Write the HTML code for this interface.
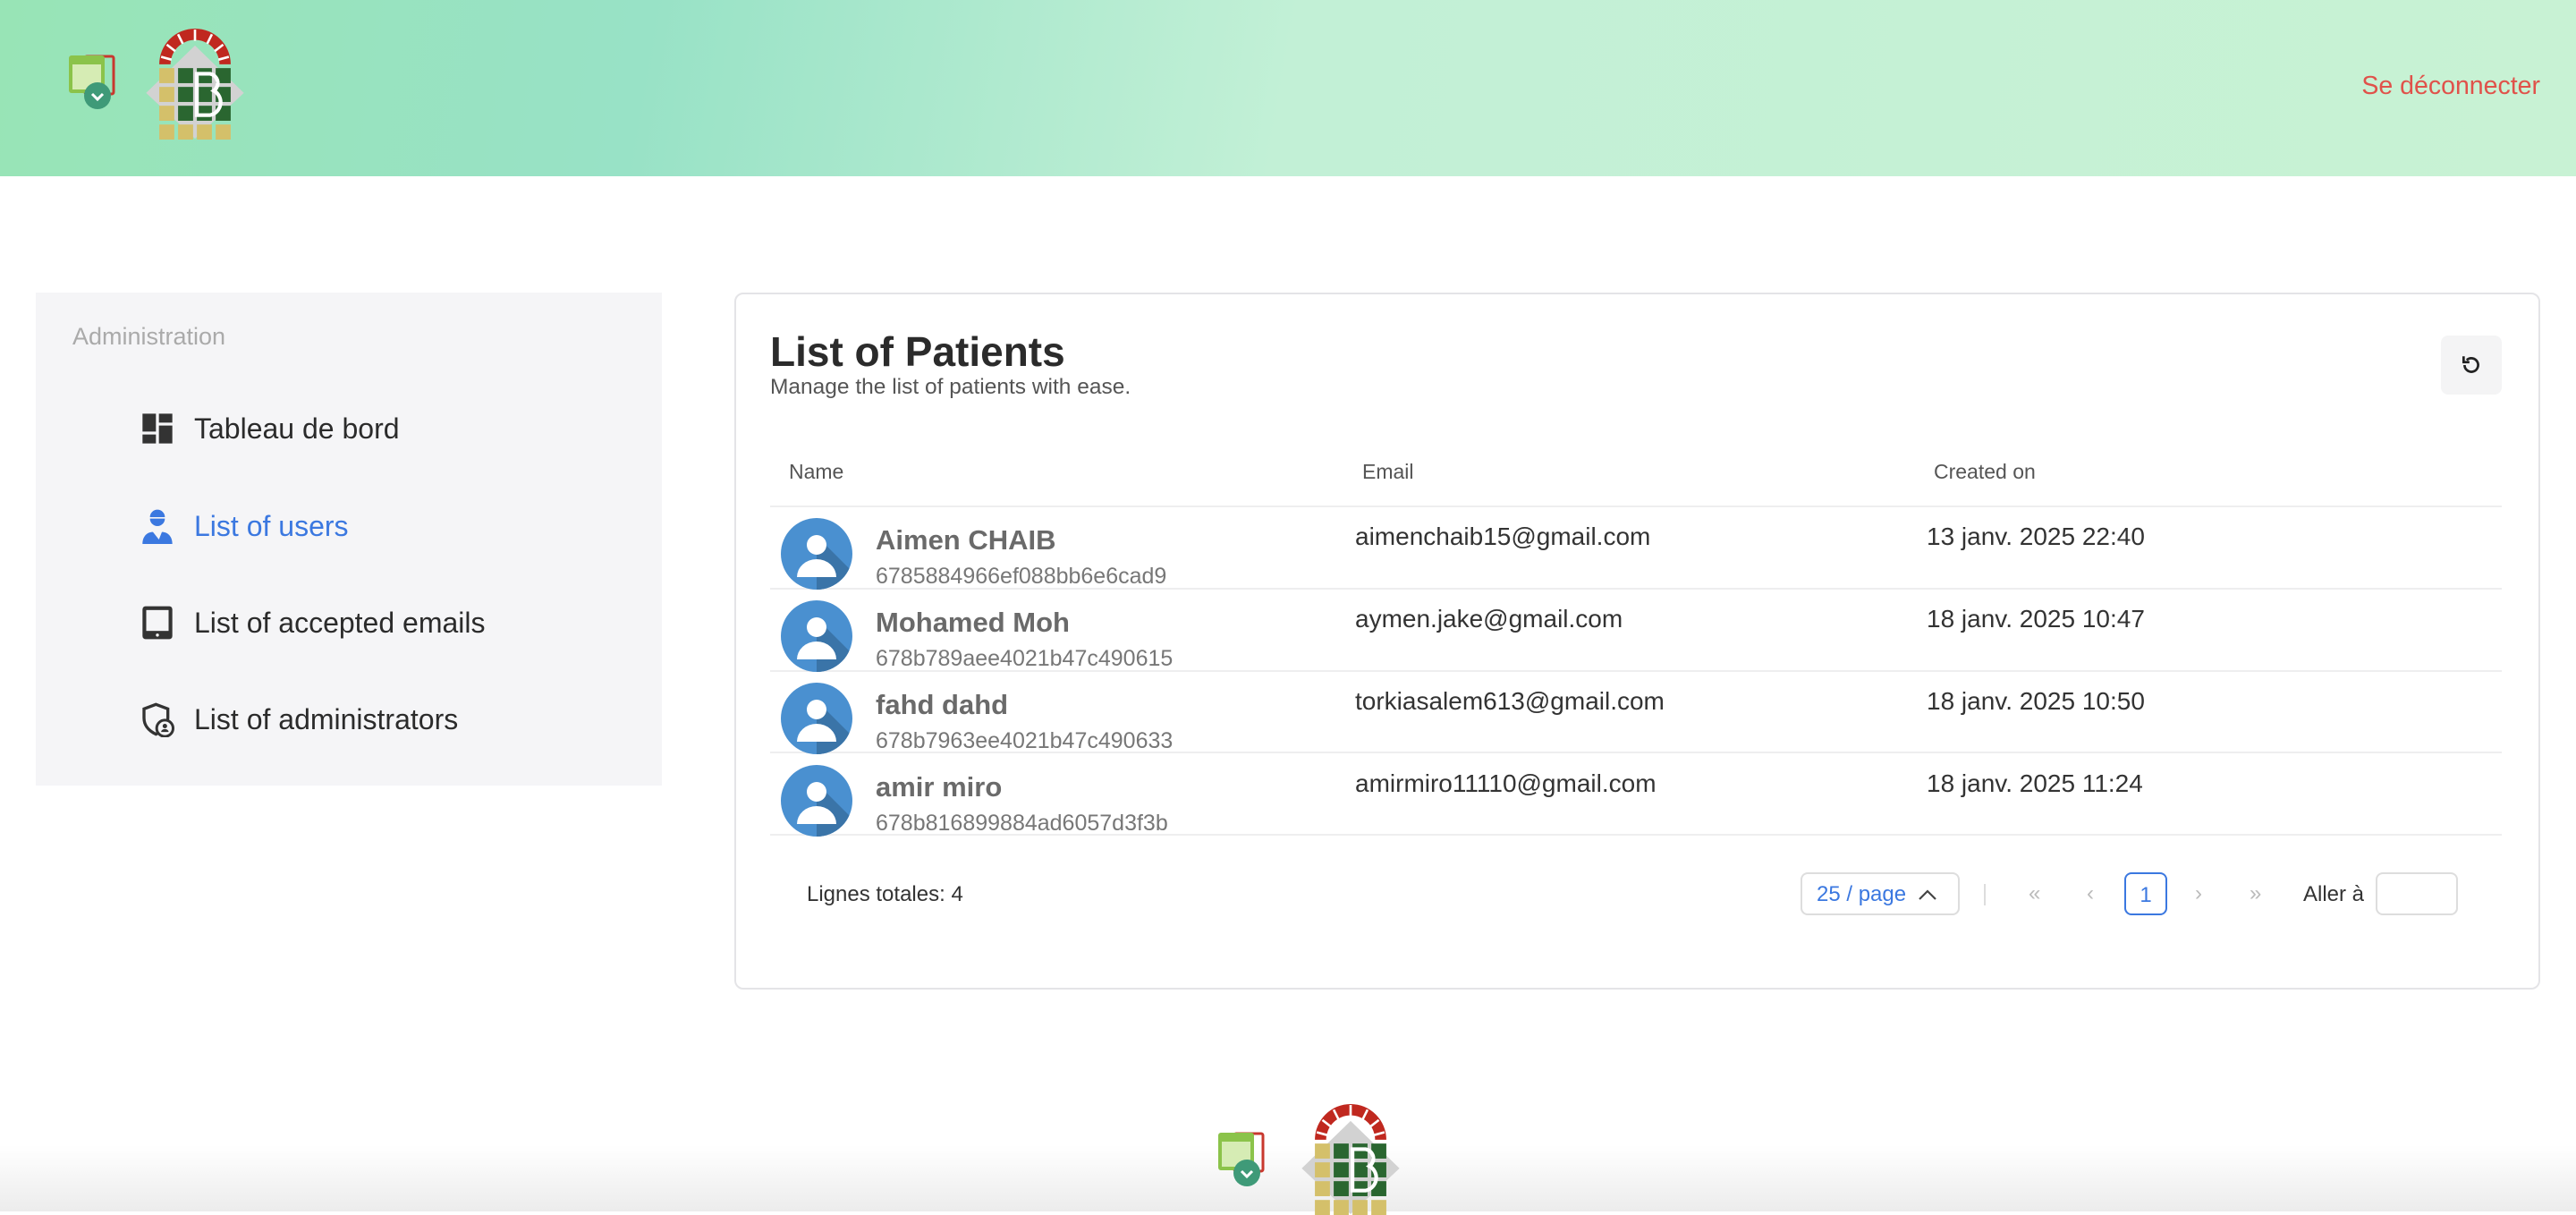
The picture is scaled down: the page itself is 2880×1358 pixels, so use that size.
<!DOCTYPE html>
<html><head><meta charset="utf-8"><style>
*{margin:0;padding:0;box-sizing:border-box}
body{width:2880px;height:1354px;overflow:hidden;background:#fff;font-family:"Liberation Sans",sans-serif;position:relative}
.abs{position:absolute}
header{position:absolute;left:0;top:0;width:2880px;height:197px;background:linear-gradient(100deg,#98e4b6 0%,#98e2c6 25%,#c2f0d6 50%,#c8f2d4 100%)}
.side{left:40px;top:327px;width:700px;height:551px;background:#f5f5f7}
.mi{position:absolute;left:156px;font-size:32px;color:#2b2b2b;display:flex;align-items:center}
.mi svg{width:40px;height:40px;margin-right:21px}
.card{left:821px;top:327px;width:2019px;height:779px;border:2px solid #e4e4e7;border-radius:10px}
.th{position:absolute;top:514px;font-size:23px;color:#555}
.line{position:absolute;left:861px;width:1936px;height:2px;background:#eeeeef}
.av{position:absolute;left:873px;width:80px;height:80px;border-radius:50%;overflow:hidden;background:#4a90d0}
.nm{position:absolute;left:979px;font-size:31px;color:#6a6a6a;font-weight:bold}
.id{position:absolute;left:979px;font-size:25px;color:#777}
.em{position:absolute;left:1515px;font-size:28px;color:#333}
.dt{position:absolute;left:2154px;font-size:28px;color:#333}
.pg{position:absolute;top:985px;font-size:24px;color:#bbb}
</style></head><body>
<header>
<svg class="abs" style="left:75px;top:60px" width="58" height="62" viewBox="0 0 58 62"><rect x="20" y="3" width="32" height="42" rx="2" fill="none" stroke="#c8382e" stroke-width="3"/><rect x="2" y="2" width="40" height="42" rx="3" fill="#8bc34a"/><rect x="6" y="12" width="32" height="28" fill="#d6ecb4"/><circle cx="34" cy="47" r="15" fill="#3f9a78"/><path d="M28 45l6 6 6-6" fill="none" stroke="#fff" stroke-width="3"/></svg>
<svg class="abs" style="left:160px;top:32px" width="116" height="124" viewBox="-14 0 104 118"><defs><g id="lg"><path d="M38 0 L90 56 38 110 -14 56Z" fill="#d2d2d2" transform="translate(0 18) scale(1 .9)"/><path d="M0 38 A38 38 0 0 1 76 38 L64 38 A26 26 0 0 0 12 38Z" fill="#c0281f"/><g stroke="#fff" stroke-width="2.5"><path d="M38 1v12M20 6l5 10M56 6l-5 10M8 17l9 7M68 17l-9 7M2 30l11 3M74 30l-11 3"/></g><g fill="#d4c06a"><rect x="0" y="42" width="16" height="16"/><rect x="0" y="62" width="16" height="16"/><rect x="0" y="82" width="16" height="16"/><rect x="0" y="102" width="16" height="16"/><rect x="20" y="102" width="16" height="16"/><rect x="40" y="102" width="16" height="16"/><rect x="60" y="102" width="16" height="16"/></g><g fill="#2a6630"><rect x="20" y="42" width="16" height="16"/><rect x="20" y="62" width="16" height="16"/><rect x="20" y="82" width="16" height="16"/><rect x="40" y="42" width="16" height="16"/><rect x="40" y="62" width="16" height="16"/><rect x="40" y="82" width="16" height="16"/><rect x="60" y="42" width="16" height="16"/><rect x="60" y="62" width="16" height="16"/><rect x="60" y="82" width="16" height="16"/></g><path d="M40 48 v44 h14 a14 14 0 0 0 4-26 a10 10 0 0 0-4-18z" fill="none" stroke="#fff" stroke-width="4"/></g></defs><use href="#lg"/></svg>
<div class="abs" style="right:40px;top:80px;font-size:28.5px;color:#e0524a">Se déconnecter</div>
</header>

<div class="abs side">
<div class="abs" style="left:41px;top:34px;font-size:27px;color:#aaa">Administration</div>
</div>
<div class="mi" style="top:459px"><svg viewBox="0 0 24 24"><path fill="#333" d="M2 2h9v12H2zM13 2h9v6h-9zM13 10h9v12h-9zM2 16h9v6H2z"/></svg>Tableau de bord</div>
<div class="mi" style="top:568px;color:#3b78e0"><svg viewBox="0 0 24 24"><path fill="#3b78e0" d="M7 6a5 5 0 0 1 10 0zM7 7h10a5 5 0 0 1-10 0zM2 24c0-5 3-8 7-8l4 5 2-5c4 0 7 3 7 8z"/></svg>List of users</div>
<div class="mi" style="top:676px"><svg viewBox="0 0 24 24"><rect x="2" y="1" width="20" height="22" rx="2" fill="#333"/><rect x="4.5" y="3.5" width="15" height="14" fill="#f5f5f7"/><circle cx="12" cy="20.3" r="1" fill="#fff"/></svg>List of accepted emails</div>
<div class="mi" style="top:784px"><svg viewBox="0 0 24 24"><path d="M11 2l8 3v6c0 6-4 9-8 11-4-2-8-5-8-11V5z" fill="none" stroke="#333" stroke-width="2"/><circle cx="17" cy="18" r="5.5" fill="#f5f5f7" stroke="#333" stroke-width="1.8"/><circle cx="17" cy="16.5" r="1.5" fill="#333"/><path d="M14.5 20.5a2.5 2 0 0 1 5 0z" fill="#333"/></svg>List of administrators</div>

<div class="abs card"></div>
<div class="abs" style="left:861px;top:366px;font-size:46px;font-weight:bold;color:#2b2b2b">List of Patients</div>
<div class="abs" style="left:861px;top:419px;font-size:24.5px;color:#555">Manage the list of patients with ease.</div>
<div class="abs" style="left:2729px;top:375px;width:68px;height:66px;border-radius:8px;background:#f4f4f5"><svg style="position:absolute;left:21px;top:20px" width="26" height="26" viewBox="0 0 24 24"><path d="M5 12a7 7 0 1 0 2.2-5.1" fill="none" stroke="#222" stroke-width="2.5"/><path d="M4 3v6h6" fill="none" stroke="#222" stroke-width="2.5"/></svg></div>

<div class="th" style="left:882px">Name</div>
<div class="th" style="left:1523px">Email</div>
<div class="th" style="left:2162px">Created on</div>
<div class="line" style="top:565px"></div>
<div class="line" style="top:657px"></div>
<div class="line" style="top:749px"></div>
<div class="line" style="top:840px"></div>
<div class="line" style="top:932px"></div>

<div class="av" style="top:579px"><svg width="80" height="80" viewBox="0 0 80 80"><path d="M40 20 L80 60 L80 80 L40 80Z" fill="#3a74a8"/><circle cx="40" cy="30" r="11" fill="#fff"/><path d="M18 66a22 20 0 0 1 44 0z" fill="#fff"/></svg></div>
<div class="nm" style="top:586px">Aimen CHAIB</div><div class="id" style="top:630px">6785884966ef088bb6e6cad9</div>
<div class="em" style="top:584px">aimenchaib15@gmail.com</div><div class="dt" style="top:584px">13 janv. 2025 22:40</div>

<div class="av" style="top:671px"><svg width="80" height="80" viewBox="0 0 80 80"><path d="M40 20 L80 60 L80 80 L40 80Z" fill="#3a74a8"/><circle cx="40" cy="30" r="11" fill="#fff"/><path d="M18 66a22 20 0 0 1 44 0z" fill="#fff"/></svg></div>
<div class="nm" style="top:678px">Mohamed Moh</div><div class="id" style="top:722px">678b789aee4021b47c490615</div>
<div class="em" style="top:676px">aymen.jake@gmail.com</div><div class="dt" style="top:676px">18 janv. 2025 10:47</div>

<div class="av" style="top:763px"><svg width="80" height="80" viewBox="0 0 80 80"><path d="M40 20 L80 60 L80 80 L40 80Z" fill="#3a74a8"/><circle cx="40" cy="30" r="11" fill="#fff"/><path d="M18 66a22 20 0 0 1 44 0z" fill="#fff"/></svg></div>
<div class="nm" style="top:770px">fahd dahd</div><div class="id" style="top:814px">678b7963ee4021b47c490633</div>
<div class="em" style="top:768px">torkiasalem613@gmail.com</div><div class="dt" style="top:768px">18 janv. 2025 10:50</div>

<div class="av" style="top:855px"><svg width="80" height="80" viewBox="0 0 80 80"><path d="M40 20 L80 60 L80 80 L40 80Z" fill="#3a74a8"/><circle cx="40" cy="30" r="11" fill="#fff"/><path d="M18 66a22 20 0 0 1 44 0z" fill="#fff"/></svg></div>
<div class="nm" style="top:862px">amir miro</div><div class="id" style="top:906px">678b816899884ad6057d3f3b</div>
<div class="em" style="top:860px">amirmiro11110@gmail.com</div><div class="dt" style="top:860px">18 janv. 2025 11:24</div>

<div class="abs" style="left:902px;top:986px;font-size:24px;color:#333">Lignes totales: 4</div>
<div class="abs" style="left:2013px;top:975px;width:178px;height:48px;border:2px solid #ddd;border-radius:8px;font-size:24px;color:#3b78e0;padding:9px 0 0 16px">25 / page <svg width="22" height="14" viewBox="0 0 22 14" style="margin-left:6px"><path d="M2 12l9-9 9 9" fill="none" stroke="#444" stroke-width="2.2"/></svg></div>
<div class="abs" style="left:2218px;top:988px;width:2px;height:24px;background:#ddd"></div>
<div class="pg" style="left:2268px">«</div>
<div class="pg" style="left:2333px">‹</div>
<div class="abs" style="left:2375px;top:975px;width:48px;height:48px;border:2px solid #3b78e0;border-radius:8px;font-size:24px;color:#3b78e0;text-align:center;padding-top:10px">1</div>
<div class="pg" style="left:2454px">›</div>
<div class="pg" style="left:2515px">»</div>
<div class="abs" style="left:2575px;top:986px;font-size:24px;color:#333">Aller à</div>
<div class="abs" style="left:2656px;top:975px;width:92px;height:48px;border:2px solid #ddd;border-radius:8px"></div>

<div class="abs" style="left:0;top:1280px;width:2880px;height:74px;background:linear-gradient(#fff,#ececec)"></div>
<svg class="abs" style="left:1360px;top:1264px" width="58" height="62" viewBox="0 0 58 62"><rect x="20" y="3" width="32" height="42" rx="2" fill="none" stroke="#c8382e" stroke-width="3"/><rect x="2" y="2" width="40" height="42" rx="3" fill="#8bc34a"/><rect x="6" y="12" width="32" height="28" fill="#d6ecb4"/><circle cx="34" cy="47" r="15" fill="#3f9a78"/><path d="M28 45l6 6 6-6" fill="none" stroke="#fff" stroke-width="3"/></svg>
<svg class="abs" style="left:1452px;top:1234px" width="116" height="124" viewBox="-14 0 104 118"><use href="#lg"/></svg>
</body></html>
